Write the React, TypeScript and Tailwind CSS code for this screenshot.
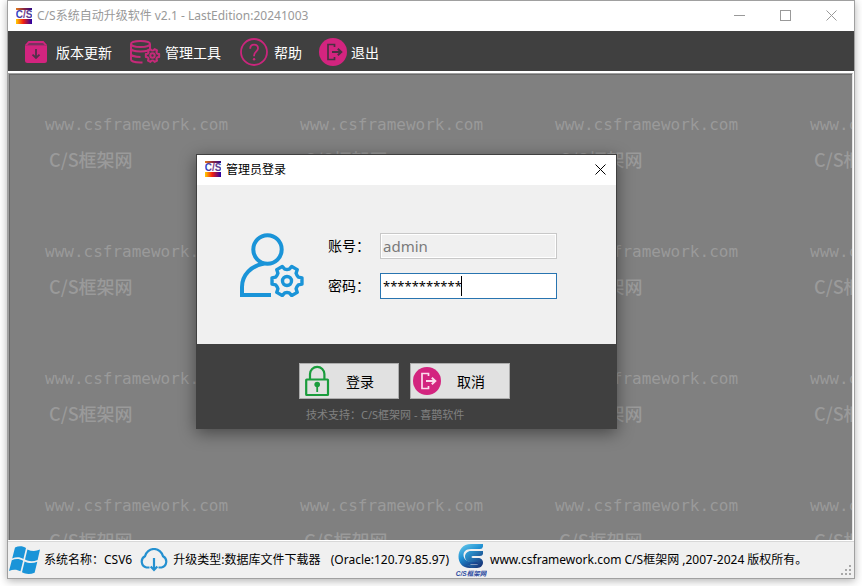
import type { ReactNode } from "react";

const ui = "font-['Noto_Sans','Noto_Sans_CJK_SC',sans-serif]";

function gearPath(cx: number, cy: number, outer: number, inner: number, teeth: number, phase: number) {
  const pt = (r: number, a: number) => `${(cx + r * Math.cos(a)).toFixed(2)} ${(cy + r * Math.sin(a)).toFixed(2)}`;
  const step = (Math.PI * 2) / teeth;
  let d = "";
  for (let i = 0; i < teeth; i++) {
    const a = phase + i * step;
    d += `${i === 0 ? "M" : "L"}${pt(outer, a - step * 0.2)} L${pt(outer, a + step * 0.2)} L${pt(inner, a + step * 0.32)} Q${pt(inner * 0.94, a + step * 0.5)} ${pt(inner, a + step * 0.68)} `;
  }
  return d + "Z";
}

function AppLogo() {
  return (
    <svg viewBox="0 0 16 16" className="size-4 shrink-0" aria-hidden="true">
      <defs>
        <linearGradient id="logoTop"><stop offset="0" stopColor="#e07b20" /><stop offset=".5" stopColor="#8a2440" /><stop offset="1" stopColor="#2b0a86" /></linearGradient>
        <linearGradient id="logoBottom"><stop offset="0" stopColor="#ffd000" /><stop offset=".45" stopColor="#f52010" /><stop offset="1" stopColor="#2400a8" /></linearGradient>
        <linearGradient id="logoText"><stop offset="0" stopColor="#1c3fd0" /><stop offset=".5" stopColor="#7a3a80" /><stop offset="1" stopColor="#3a3aa8" /></linearGradient>
      </defs>
      <rect width="16" height="16" fill="#fff" />
      <rect width="16" height="2" fill="url(#logoTop)" />
      <rect y="11" width="16" height="5" fill="url(#logoBottom)" />
      <text x="8" y="10" textAnchor="middle" fontSize="10" fontWeight="700" fontFamily="Liberation Sans, sans-serif" fill="url(#logoText)">C/S</text>
    </svg>
  );
}

function BoxIcon() {
  return (
    <svg viewBox="0 0 32 32" className="size-8" aria-hidden="true">
      <path d="M8.500 5h15L27 9H5z" fill="#d3247f" />
      <path d="M9 7h14l2 2.300H7z" fill="#7a3160" />
      <path d="M5 9.300h22v15.200a2.500 2.500 0 0 1-2.500 2.500h-17A2.500 2.500 0 0 1 5 24.500z" fill="#d3247f" />
      <path d="M16 13v9m-3.500-3.300L16 22l3.500-3.300" fill="none" stroke="#53304a" strokeWidth="1.800" />
    </svg>
  );
}

function DatabaseIcon() {
  return (
    <svg viewBox="0 0 32 32" className="size-8" fill="none" stroke="#c52a79" strokeWidth="2" aria-hidden="true">
      <ellipse cx="11.500" cy="8" rx="9.500" ry="3" />
      <path d="M2 8v4.500c0 1.700 4.200 3 9.500 3s9.500-1.300 9.500-3V8M2 13v5c0 1.600 4 2.900 9.500 3M2 18v5.500c0 1.700 4.200 3 9.500 3h2" />
      <path d={gearPath(23.500, 19.500, 6.800, 5.200, 6, 0)} strokeLinejoin="round" />
      <circle cx="23.500" cy="19.500" r="2.200" />
    </svg>
  );
}

function HelpIcon() {
  return (
    <svg viewBox="0 0 32 32" className="size-8" fill="none" stroke="#c9267c" strokeWidth="1.800" aria-hidden="true">
      <circle cx="16" cy="16" r="13" />
      <path d="M12.200 12.800c0-2.600 1.600-4.200 3.900-4.200s3.900 1.500 3.900 3.700c0 3.200-3.900 3.500-3.900 7v.9" />
      <circle cx="16.100" cy="23.200" r="1.200" fill="#c9267c" stroke="none" />
    </svg>
  );
}

function ExitIcon({ light }: { light?: boolean }) {
  return (
    <svg viewBox="0 0 28 28" className="size-7 shrink-0" aria-hidden="true">
      <circle cx="14" cy="14" r="14" fill="#d3247f" />
      <g fill="none" stroke={light ? "#fbdcec" : "#4a3042"} strokeWidth="1.700">
        <path d="M15.500 9V6.500H9v15h6.500V19" />
        <path d="M13 14h9m-3.200-3.300L22.300 14l-3.500 3.300" strokeWidth="2" />
      </g>
    </svg>
  );
}

function UserGearIcon() {
  return (
    <svg viewBox="0 0 64 64" className="size-16 shrink-0" fill="none" stroke="#1a94d8" strokeWidth="4" aria-hidden="true">
      <circle cx="27.500" cy="16.500" r="14.200" />
      <path d="M24 30.500C11 33 2 42 2 54v8h29" />
      <path d={gearPath(47, 48, 15.300, 12, 6, 0)} strokeWidth="3.400" strokeLinejoin="round" />
      <circle cx="47" cy="48" r="4.500" strokeWidth="3.400" />
    </svg>
  );
}

function LockIcon() {
  return (
    <svg viewBox="0 0 26 32" className="h-8 w-[26px] shrink-0" fill="none" stroke="#1a9c3c" strokeWidth="2.200" aria-hidden="true">
      <rect x="2.200" y="14.500" width="21.800" height="15.500" rx=".5" />
      <path d="M6 14V9a7.200 7.200 0 0 1 14.400 0v5" />
      <circle cx="13.200" cy="19.500" r="2.800" fill="#1a9c3c" stroke="none" />
      <path d="M13.200 20v7" strokeWidth="1.800" />
    </svg>
  );
}

function WindowsIcon() {
  return (
    <svg viewBox="0 0 32 32" className="size-8 shrink-0" fill="#1a94d8" aria-hidden="true">
      <path d="M7 3.500c4-2 8-1.600 11 .6L15.400 15C12 12.800 8 12.800 4.200 14.500z" />
      <path d="M19.400 5.400c4.200 2 8.400 2 12.600.2L29.600 16c-4.400 1.800-8.600 1.800-12.600-.4z" />
      <path d="M3.800 16.300c4-1.900 7.800-1.600 11.300.5l-2.600 10.500C9 25.300 5 25.100 1 27z" />
      <path d="M16.600 17.400c4.200 2.100 8.400 2 12.700.3l-2.700 11c-4.200 1.800-8.600 1.800-12.600-.4z" />
    </svg>
  );
}

function CloudIcon() {
  return (
    <svg viewBox="0 0 30 24" className="h-6 w-[30px] shrink-0" fill="none" stroke="#2490d0" strokeWidth="2.200" aria-hidden="true">
      <path d="M10.500 19.500H7.500A6 6 0 0 1 6 8.300 9.200 9.200 0 0 1 24 8.300a6 6 0 0 1-1.500 11.200h-3" />
      <path d="M15 10v12m-3.300-3.500L15 22l3.300-3.500" />
    </svg>
  );
}

function BrandIcon() {
  return (
    <svg viewBox="0 0 32 34" className="h-[34px] w-8 shrink-0" aria-hidden="true">
      <defs>
        <linearGradient id="brandOuter" x1="0" y1="0" x2=".6" y2="1"><stop offset="0" stopColor="#6fd0ee" /><stop offset=".5" stopColor="#1e8fd2" /><stop offset="1" stopColor="#16317c" /></linearGradient>
        <linearGradient id="brandInner" x1="0" y1="0" x2="1" y2="1"><stop offset="0" stopColor="#2fa8e0" /><stop offset="1" stopColor="#15296e" /></linearGradient>
      </defs>
      <path d="M28 1v2.500Q27.500 6 25 6H16C10.500 6 8.500 9 8.500 12s2.500 6.500 7 6.500H22q2 0 2 1.500t-2 1.500h-7l6 3.500h-6C7 25 3.500 19.500 3.500 13.500S7.500 1 16 1z" fill="url(#brandOuter)" />
      <path d="M28 8v3q-.5 2-3 2h-7q-1.500 0-1.500 1t1.500 1h5c3 0 5 2 5 4.500S26 25 22 25h-6l-4-3h9q2 0 2-1.500T21 19h-5c-4 0-6-2.500-6-5.500S12.500 8 16 8z" fill="url(#brandInner)" />
      <text x="16" y="32.500" textAnchor="middle" fontSize="6.500" fontWeight="700" fontStyle="italic" fontFamily="Liberation Sans, Noto Sans CJK SC, sans-serif" fill="#2c4aa0">C/S框架网</text>
    </svg>
  );
}

function ToolButton({ icon, children }: { icon: ReactNode; children: ReactNode }) {
  return (
    <button type="button" className="flex items-center gap-1 text-sm text-white">
      {icon}
      <span className="pt-[2px]">{children}</span>
    </button>
  );
}

const caption = "flex w-[46px] items-center justify-center";

function LoginDialog() {
  return (
    <section role="dialog" aria-label="管理员登录" className="absolute top-[154px] left-[196px] w-[421px] border border-[#404040] bg-[#f0f0f0] shadow-[0_4px_16px_rgba(0,0,0,0.45)]">
      <header className="flex h-[30px] items-center gap-[5px] bg-white pb-[2px] pl-2 text-xs text-black">
        <AppLogo />
        <h2 className="pt-[2px]">管理员登录</h2>
        <button type="button" aria-label="关闭" className="ml-auto flex h-7 w-8 items-center justify-center">
          <svg viewBox="0 0 11 11" className="size-[11px]" stroke="#000" aria-hidden="true"><path d="M.5.500l10 10m0-10l-10 10" /></svg>
        </button>
      </header>
      <form>
        <div className="flex h-[159px] items-start gap-6 pt-12 pl-[43px]">
          <UserGearIcon />
          <div className="grid grid-cols-[52px_177px] items-center gap-y-[14px] text-sm text-black">
            <label htmlFor="account">账号：</label>
            <input id="account" disabled defaultValue="admin" className="h-[26px] border border-[#c8c8c8] bg-[#f0f0f0] px-[2px] text-[15px] text-[#7a7a7a] inset-ring inset-ring-white" />
            <label htmlFor="password">密码：</label>
            <div className="relative">
              <input id="password" autoComplete="off" defaultValue="***********" className="block h-[26px] w-full border border-[#2874b0] bg-white px-[2px] text-[13px] text-black outline-none" />
              <span className="absolute top-[3px] left-[81px] h-5 w-px bg-black" />
            </div>
          </div>
        </div>
        <footer className="flex h-[84px] flex-col bg-[#404040] pt-[19px] pl-[102px]">
          <div className="flex gap-[11px] text-sm text-black">
            <button type="submit" className="flex h-9 w-[100px] items-center gap-4 border border-[#adadad] bg-[#e1e1e1] pl-1">
              <LockIcon />
              <span className="pt-[2px]">登录</span>
            </button>
            <button type="button" className="flex h-9 w-[100px] items-center gap-4 border border-[#adadad] bg-[#e1e1e1] pl-[2px]">
              <ExitIcon light />
              <span className="pt-[2px]">取消</span>
            </button>
          </div>
          <p className="mt-2 pl-[7px] text-[11px] leading-4 text-[#808080]">技术支持：C/S框架网 - 喜鹊软件</p>
        </footer>
      </form>
    </section>
  );
}

export default function App() {
  return (
    <div className={`relative flex h-screen flex-col bg-white px-[7px] pb-[7px] ${ui}`}>
      <main className="flex min-h-0 flex-1 flex-col border border-[#a0a0a0] bg-white shadow-[0_2px_8px_rgba(0,0,0,0.3)]">
        <header className="flex h-[30px] shrink-0 items-center gap-[5px] pl-2 text-xs text-[#999]">
          <AppLogo />
          <h1>C/S系统自动升级软件 v2.1 - LastEdition:20241003</h1>
          <div className="ml-auto flex h-full pb-[2px]">
            <button type="button" aria-label="最小化" className={caption}>
              <svg viewBox="0 0 11 11" className="size-[11px]" stroke="#999" aria-hidden="true"><path d="M0 5.500h11" /></svg>
            </button>
            <button type="button" aria-label="最大化" className={caption}>
              <svg viewBox="0 0 11 11" className="size-[11px]" fill="none" stroke="#999" aria-hidden="true"><rect x=".5" y=".5" width="10" height="10" /></svg>
            </button>
            <button type="button" aria-label="关闭窗口" className={caption}>
              <svg viewBox="0 0 11 11" className="size-[11px]" stroke="#999" aria-hidden="true"><path d="M.5.500l10 10m0-10l-10 10" /></svg>
            </button>
          </div>
        </header>
        <nav className="flex h-10 shrink-0 items-center gap-[17px] bg-[#404040] pt-[2px] pl-3">
          <ToolButton icon={<BoxIcon />}>版本更新</ToolButton>
          <ToolButton icon={<DatabaseIcon />}>管理工具</ToolButton>
          <ToolButton icon={<HelpIcon />}>帮助</ToolButton>
          <ToolButton icon={<ExitIcon />}>退出</ToolButton>
        </nav>
        <div className="mt-[2px] mr-px mb-px flex min-h-0 flex-1 border-t border-r border-l border-t-[#a0a0a0] border-r-[#e3e3e3] border-l-[#a0a0a0]">
          <div className="min-w-0 flex-1 overflow-hidden border-t border-l border-[#696969] bg-[#808080]">
            <div className="grid auto-rows-[127px] grid-cols-[repeat(4,255px)] text-[#9a9a9a]">
              {Array.from({ length: 16 }, (_, i) => (
                <div key={i} className="pt-[34px] pl-[35px]">
                  <p className="font-['DejaVu_Sans_Mono',monospace] text-base leading-8">www.csframework.com</p>
                  <p className="pl-1 font-['Noto_Sans_CJK_SC',sans-serif] text-lg leading-9 font-medium">C/S框架网</p>
                </div>
              ))}
            </div>
          </div>
        </div>
        <footer className="flex h-[37px] shrink-0 items-center border-t border-[#d8d8d8] bg-[#f0f0f0] text-xs whitespace-nowrap text-black">
          <WindowsIcon />
          <span className="pl-1">系统名称：CSV6</span>
          <span className="flex items-center gap-1 pl-[7px]"><CloudIcon />升级类型:数据库文件下载器<span>&nbsp; (Oracle:120.79.85.97)</span></span>
          <span className="flex items-center gap-[3px] pl-[6px]"><BrandIcon />www.csframework.com C/S框架网 ,2007-2024 版权所有。</span>
          <svg viewBox="0 0 11 11" className="mr-[2px] mb-[2px] ml-auto size-[11px] self-end" fill="#a8a8a8" aria-hidden="true">
            <path d="M8 0h2v2H8zM4 4h2v2H4zM8 4h2v2H8zM0 8h2v2H0zM4 8h2v2H4zM8 8h2v2H8z" />
          </svg>
        </footer>
      </main>
      <LoginDialog />
    </div>
  );
}
